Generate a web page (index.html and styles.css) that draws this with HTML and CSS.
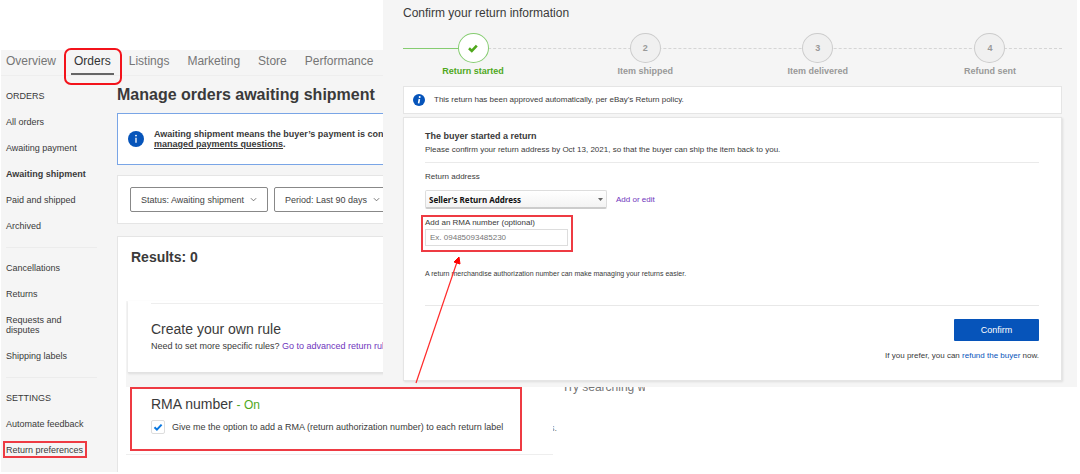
FILE: index.html
```html
<!DOCTYPE html>
<html lang="en">
<head>
<meta charset="utf-8">
<title>Return preferences and RMA number</title>
<link rel="stylesheet" href="styles.css">
</head>
<body>
<div class="canvas">
  <div class="orders-page">
    <nav class="tabs">
      <a href="#">Overview</a>
      <a href="#" class="active">Orders<span class="mark mark-tab"></span></a>
      <a href="#">Listings</a>
      <a href="#">Marketing</a>
      <a href="#">Store</a>
      <a href="#">Performance</a>
    </nav>
    <div class="columns">
      <aside class="sidebar">
        <section>
          <h2>ORDERS</h2>
          <a href="#">All orders</a>
          <a href="#">Awaiting payment</a>
          <a href="#" class="current">Awaiting shipment</a>
          <a href="#">Paid and shipped</a>
          <a href="#">Archived</a>
        </section>
        <section>
          <a href="#">Cancellations</a>
          <a href="#">Returns</a>
          <a href="#">Requests and disputes</a>
          <a href="#">Shipping labels</a>
        </section>
        <section>
          <h2>SETTINGS</h2>
          <a href="#">Automate feedback</a>
          <a href="#" class="marked">Return preferences<span class="mark mark-link"></span></a>
        </section>
      </aside>
      <main class="content">
        <h1>Manage orders awaiting shipment</h1>
        <div class="banner">
          <svg class="info" viewBox="0 0 16 16" aria-hidden="true"><circle cx="8" cy="8" r="8" fill="#0654ba"/><circle cx="8" cy="4.6" r=".9" fill="#fff"/><path d="M8 6.8v5" stroke="#fff" stroke-width="1.3"/></svg>
          <p>Awaiting shipment means the buyer’s payment is confirmed.<br><a href="#">managed payments questions</a>.</p>
        </div>
        <div class="filters">
          <button type="button">Status: Awaiting shipment <svg viewBox="0 0 8 5" aria-hidden="true"><path d="M1 1l3 3 3-3"/></svg></button>
          <button type="button">Period: Last 90 days <svg viewBox="0 0 8 5" aria-hidden="true"><path d="M1 1l3 3 3-3"/></svg></button>
        </div>
        <div class="results">
          <h2>Results: 0</h2>
        </div>
      </main>
    </div>
  </div>

  <p class="hint">Try searching with</p>
  <p class="stop">s.</p>

  <section class="rules">
    <div class="rule-card">
      <div class="rule-body">
        <h2>Create your own rule</h2>
        <p>Need to set more specific rules? <a href="#">Go to advanced return rules</a></p>
      </div>
    </div>
    <div class="rma-card">
      <h2>RMA number <span class="on">- On</span></h2>
      <div class="option">
        <span class="check">
          <input type="checkbox" id="rma-option" checked>
          <svg viewBox="0 0 14 14" aria-hidden="true"><path d="M3.5 7.3l2.4 2.3 4.7-5" fill="none" stroke="#0a78e0" stroke-width="2"/></svg>
        </span>
        <label for="rma-option">Give me the option to add a RMA (return authorization number) to each return label</label>
      </div>
    </div>
  </section>

  <section class="return-window">
    <h2 class="window-title">Confirm your return information</h2>
    <ol class="steps">
      <li class="done"><span class="dot"><svg viewBox="0 0 10 9" aria-hidden="true"><path d="M1 4.3l2.800 2.700 5-5.300" fill="none" stroke="#4fa81c" stroke-width="2.600"/></svg></span>Return started</li>
      <li><span class="dot">2</span>Item shipped</li>
      <li><span class="dot">3</span>Item delivered</li>
      <li><span class="dot">4</span>Refund sent</li>
    </ol>
    <div class="notice">
      <svg class="info-small" viewBox="0 0 12 12" aria-hidden="true"><circle cx="6" cy="6" r="6" fill="#0654ba"/><circle cx="6.7" cy="3" r="1" fill="#fff"/><path d="M6.4 5L5.6 9.3" stroke="#fff" stroke-width="1.6"/></svg>
      <p>This return has been approved automatically, per eBay's Return policy.</p>
    </div>
    <form class="card">
      <h3>The buyer started a return</h3>
      <p class="lead">Please confirm your return address by Oct 13, 2021, so that the buyer can ship the item back to you.</p>
      <label class="address-label" for="address">Return address</label>
      <div class="address-row">
        <span class="select-wrap">
          <select id="address"><option>Seller's Return Address</option></select>
          <svg viewBox="0 0 5 3" aria-hidden="true"><path d="M0 0h5L2.5 3z" fill="#666"/></svg>
        </span>
        <a href="#">Add or edit</a>
      </div>
      <div class="rma-field">
        <label for="rma">Add an RMA number (optional)</label>
        <input type="text" id="rma" placeholder="Ex. 09485093485230">
      </div>
      <p class="note">A return merchandise authorization number can make managing your returns easier.</p>
      <div class="actions">
        <button type="button">Confirm</button>
        <p>If you prefer, you can <a href="#">refund the buyer</a> now.</p>
      </div>
    </form>
  </section>

  <svg class="arrow" viewBox="0 0 48 130" aria-hidden="true"><path d="M2 128L43 7" stroke="#ff2a2a" stroke-width="1.2"/><path d="M45 2l1 7-6-2z" fill="#f00" stroke="#f00"/></svg>
</div>
</body>
</html>
```
FILE: styles.css
```css
* { box-sizing: border-box; }
body {
  margin: 0;
  background: #fff;
  color: #3a3a3a;
  font: 9px/10px "Liberation Sans", Arial, sans-serif;
}
h1, h2, h3, p, ol { margin: 0; padding: 0; }
h2 { font-weight: normal; }
a { color: inherit; text-decoration: none; }
button, input, select { font-family: inherit; }

.canvas { position: relative; overflow: hidden; min-height: 100vh; }

/* Orders page */
.orders-page { padding: 50px 3px 0 1px; }
.tabs {
  display: flex;
  gap: 18px;
  height: 26px;
  padding-left: 5px;
  background: #f5f5f5;
  border-bottom: 1px solid #eee;
  color: #767676;
  font-size: 12px;
  line-height: 22px;
}
.tabs .active {
  position: relative;
  height: 25px;
  margin: 0 -3px;
  padding: 0 3px;
  border-bottom: 2px solid #666;
  color: #333;
}
.mark { position: absolute; border: 2px solid #f3131b; pointer-events: none; }
.mark-tab { inset: -2px -8px -12px -7px; border-radius: 7px; }
.mark-link { inset: 4px 10px 5px -3px; border-color: #ee3b43; }

.columns { display: flex; }
.sidebar { flex: 0 0 116px; padding: 7px 20px 0 5px; background: #f5f5f5; }
.sidebar section + section { margin-top: 8px; padding-top: 7px; border-top: 1px solid #ececec; }
.sidebar section:last-child { padding-bottom: 9px; }
.sidebar h2 { padding: 8px 0; font-size: 9px; }
.sidebar a { display: block; padding: 8px 0; }
.sidebar .current { font-weight: bold; }
.sidebar .marked { position: relative; white-space: nowrap; }

.content {
  flex: 1;
  display: flex;
  flex-direction: column;
  min-width: 0;
  padding-top: 9px;
  background: #f5f5f5;
}
.content h1 { font-size: 16px; line-height: 20px; margin-bottom: 8px; }
.banner {
  display: flex;
  align-items: center;
  gap: 10px;
  height: 52px;
  padding-left: 10px;
  background: #fff;
  border: 1px solid #79a5e6;
  font-weight: bold;
}
.banner a { text-decoration: underline; }
.info { width: 16px; height: 16px; }
.filters {
  display: flex;
  gap: 6px;
  margin: 10px 0 12px;
  padding: 11px 12px;
  background: #fff;
  border: 1px solid #e5e5e5;
}
.filters button {
  display: flex;
  align-items: center;
  gap: 6px;
  height: 25px;
  padding: 0 10px;
  background: #fff;
  border: 1px solid #888;
  border-radius: 2px;
  color: #444;
  font-size: 9px;
}
.filters svg { width: 7px; height: 5px; fill: none; stroke: #666; }
.results {
  flex: 1;
  padding: 11px 13px;
  background: #fff;
  border: solid #e5e5e5;
  border-width: 1px 0 0 1px;
}
.results h2 { font-size: 14px; font-weight: bold; line-height: 18px; }

.hint, .stop { position: absolute; overflow: hidden; white-space: nowrap; color: #767676; }
.hint { left: 562px; top: 380px; width: 83px; font-size: 12px; line-height: 14px; }
.stop { left: 550px; top: 423px; }

/* Return rules */
.rules {
  position: absolute;
  left: 126px;
  top: 301px;
  width: 427px;
  background: #f5f5f5;
}
.rule-card {
  height: 72px;
  margin: 0 0 14px 2px;
  padding: 2px 0 0 23px;
  background: #fff;
  border-bottom: 1px solid #e2e2e2;
  box-shadow: 0 1px 2px #ddd;
}
.rule-body { padding-top: 17px; border-top: 1px solid #eee; }
.rules h2 { font-size: 14px; line-height: 16px; }
.rules p { margin-top: 4px; }
.rules p a { color: #6f35bd; }
.rma-card {
  position: relative;
  padding: 9px 0 20px 25px;
  background: #fff;
  border-bottom: 1px solid #eee;
}
.rma-card::after {
  content: "";
  position: absolute;
  inset: 0 31px 3px 4px;
  border: 2px solid #ee3b43;
  pointer-events: none;
}
.on { color: #4fa81c; font-size: 12px; }
.option { display: flex; align-items: center; gap: 7px; margin-top: 7px; font-size: 9px; }
.check { display: grid; }
.check > * { grid-area: 1 / 1; width: 14px; height: 14px; margin: 0; pointer-events: none; }
.check input { appearance: none; border: 1px solid #ddd; border-radius: 2px; background: #fff; }

/* Return confirmation */
.return-window {
  position: absolute;
  left: 383px;
  right: 3px;
  top: 0;
  padding: 6px 15px 6px 20px;
  background: #f5f5f5;
  font-size: 8px;
}
.window-title { font-size: 12px; line-height: 14px; }
.steps {
  position: relative;
  display: flex;
  justify-content: space-between;
  margin-top: 13px;
  padding-right: 2px;
  list-style: none;
  color: #999;
  font-size: 9px;
  font-weight: bold;
}
.steps::before {
  content: "";
  position: absolute;
  left: 0;
  right: 0;
  top: 15px;
  border-top: 1px dashed #d5d5d5;
}
.steps li {
  position: relative;
  display: flex;
  flex-direction: column;
  align-items: center;
  gap: 3px;
  width: 140px;
}
.dot {
  position: relative;
  display: flex;
  align-items: center;
  justify-content: center;
  width: 31px;
  height: 30px;
  background: #f0f0f0;
  border: 1px solid #ccc;
  border-radius: 50%;
}
.steps .done { color: #4fa81c; }
.done::before {
  content: "";
  position: absolute;
  left: 0;
  right: 50%;
  top: 15px;
  border-top: 1px solid #85cc70;
}
.done .dot { background: #fff; border-color: #85cc70; }
.dot svg { width: 10px; height: 9px; }

.notice {
  display: flex;
  align-items: center;
  gap: 9px;
  height: 28px;
  margin-top: 10px;
  padding-left: 9px;
  background: #fff;
  border: 1px solid #e5e5e5;
}
.info-small { width: 12px; height: 12px; }
.card {
  margin-top: 3px;
  padding: 13px 22px 19px 21px;
  background: #fff;
  border: 1px solid #e5e5e5;
  box-shadow: 1px 1px 2px #ddd;
}
.card h3 { font-size: 9px; }
.lead { padding: 4px 0 7px; border-bottom: 1px solid #eaeaea; }
.address-label { display: block; margin-top: 9px; }
.address-row { display: flex; align-items: center; gap: 9px; margin-top: 8px; }
.address-row a { color: #6f35bd; }
.select-wrap { display: grid; align-items: center; width: 182px; }
.select-wrap > * { grid-area: 1 / 1; }
.select-wrap svg { justify-self: end; width: 5px; height: 3px; margin-right: 4px; pointer-events: none; }
.select-wrap select {
  appearance: none;
  width: 100%;
  height: 19px;
  padding: 0 3px;
  background: linear-gradient(#fff, #f3f3f3);
  border: 1px solid #ddd;
  border-bottom: 2px solid #ccc;
  border-radius: 2px;
  color: #111;
  font: bold 8px "Noto Sans", sans-serif;
}
.rma-field {
  display: flex;
  flex-direction: column;
  gap: 1px;
  width: 152px;
  margin: 6px 0 0 -4px;
  padding: 1px 3px 4px 2px;
  border: 2px solid #ee3b43;
}
.rma-field input {
  width: 143px;
  height: 17px;
  padding: 0 4px;
  border: 1px solid #ddd;
  font-size: 8px;
}
.rma-field input::placeholder { color: #767676; }
.note { margin-top: 17px; padding-bottom: 26px; border-bottom: 1px solid #e8e8e8; font-size: 7px; }
.actions { display: flex; flex-direction: column; align-items: flex-end; gap: 10px; margin-top: 13px; }
.actions button {
  width: 85px;
  height: 22px;
  background: #0654ba;
  border: 0;
  border-radius: 1px;
  color: #fff;
  font-size: 9px;
}
.actions a { color: #0654ba; }

.arrow { position: absolute; left: 414px; top: 255px; width: 48px; height: 130px; pointer-events: none; }
```
